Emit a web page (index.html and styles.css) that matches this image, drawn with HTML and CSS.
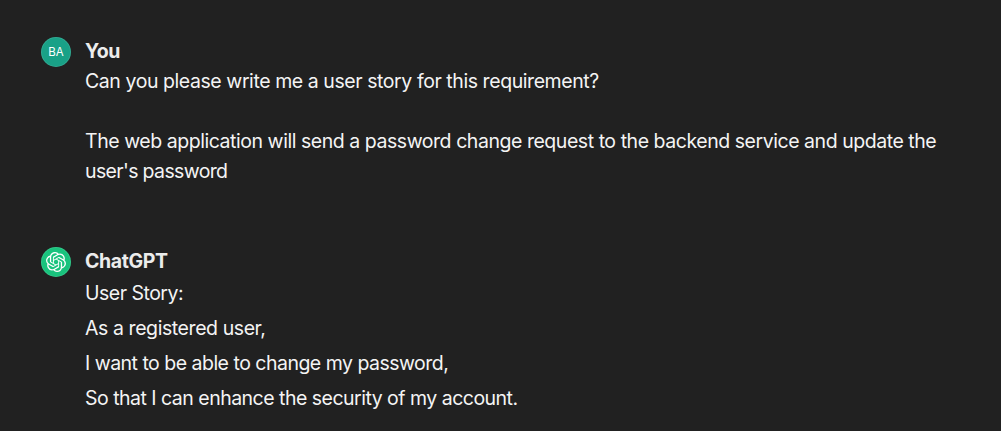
FILE: index.html
```html
<!DOCTYPE html>
<html lang="en">
<head>
<meta charset="utf-8">
<title>ChatGPT</title>
<link rel="stylesheet" href="styles.css">
</head>
<body>
<main class="chat">
  <article class="message">
    <div class="avatar avatar-user">BA</div>
    <div class="content">
      <h2 class="author">You</h2>
      <p class="line question">Can you please write me a user story for this requirement?</p>
      <p class="line requirement">The web application will send a password change request to the backend service and update the</p>
      <p class="line ending">user's password</p>
    </div>
  </article>
  <article class="message reply">
    <div class="avatar avatar-bot">
      <svg class="logo" viewBox="0 0 24 24" fill="currentColor" aria-hidden="true"><path d="M22.282 9.821a5.985 5.985 0 0 0-.516-4.91 6.046 6.046 0 0 0-6.51-2.9A6.065 6.065 0 0 0 4.981 4.18a5.985 5.985 0 0 0-3.998 2.9 6.046 6.046 0 0 0 .743 7.097 5.98 5.98 0 0 0 .51 4.911 6.051 6.051 0 0 0 6.515 2.9A5.985 5.985 0 0 0 13.26 24a6.056 6.056 0 0 0 5.772-4.206 5.99 5.99 0 0 0 3.997-2.9 6.056 6.056 0 0 0-.747-7.073zM13.26 22.43a4.476 4.476 0 0 1-2.876-1.04l.141-.081 4.779-2.758a.795.795 0 0 0 .392-.681v-6.737l2.02 1.168a.071.071 0 0 1 .038.052v5.583a4.504 4.504 0 0 1-4.494 4.494zM3.6 18.304a4.47 4.47 0 0 1-.535-3.014l.142.085 4.783 2.759a.771.771 0 0 0 .78 0l5.843-3.369v2.332a.08.08 0 0 1-.033.062L9.74 19.95a4.5 4.5 0 0 1-6.14-1.646zM2.34 7.896a4.485 4.485 0 0 1 2.366-1.973V11.6a.766.766 0 0 0 .388.676l5.815 3.355-2.02 1.168a.076.076 0 0 1-.071 0l-4.83-2.786A4.504 4.504 0 0 1 2.34 7.872zm16.597 3.855l-5.833-3.387L15.119 7.2a.076.076 0 0 1 .071 0l4.83 2.791a4.494 4.494 0 0 1-.676 8.105v-5.678a.79.79 0 0 0-.407-.667zm2.01-3.023l-.141-.085-4.774-2.782a.776.776 0 0 0-.785 0L9.409 9.23V6.897a.066.066 0 0 1 .028-.061l4.83-2.787a4.5 4.5 0 0 1 6.68 4.66zm-12.64 4.135l-2.02-1.164a.08.08 0 0 1-.038-.057V6.075a4.5 4.5 0 0 1 7.375-3.453l-.142.08L8.704 5.46a.795.795 0 0 0-.393.681zm1.097-2.365l2.602-1.5 2.607 1.5v2.999l-2.597 1.5-2.607-1.5z"/></svg>
    </div>
    <div class="content">
      <h2 class="author">ChatGPT</h2>
      <div class="story">
        <p class="line">User Story:</p>
        <p class="line role">As a registered user,</p>
        <p class="line">I want to be able to change my password,</p>
        <p class="line">So that I can enhance the security of my account.</p>
      </div>
    </div>
  </article>
</main>
</body>
</html>
```
FILE: styles.css
```css
* { box-sizing: border-box; }
body {
  margin: 0;
  background: #212121;
  color: #f4f4f4;
  font-family: Inter, "Liberation Sans", sans-serif;
  font-size: 19.5px;
  overflow: hidden;
}
.chat { height: 431px; padding: 36px 0 0 41px; }
.message { display: flex; gap: 14px; }
.avatar {
  display: flex;
  align-items: center;
  justify-content: center;
  flex: none;
  width: 30px;
  height: 30px;
  margin-top: 1px;
  border-radius: 50%;
  color: #fff;
  box-shadow: inset 0 0 0 1px rgba(255, 255, 255, 0.1);
}
.avatar-user { background: #19a187; font-size: 11.5px; font-weight: 400; }
.avatar-bot { background: #19c37d; }
.logo { width: 20px; height: 20px; }
.author {
  margin: 0;
  color: #ececec;
  font-size: 19.5px;
  font-weight: 700;
  line-height: 30px;
  letter-spacing: -0.4px;
}
.line {
  margin: 0;
  line-height: 30px;
  white-space: nowrap;
  letter-spacing: -0.51px;
}
.question { letter-spacing: -0.43px; }
.requirement { margin-top: 30px; letter-spacing: -0.455px; }
.ending { letter-spacing: -0.65px; }
.role { letter-spacing: -0.42px; }
.reply { margin-top: 60px; }
.story { display: grid; gap: 5px; padding-top: 2px; }
```
